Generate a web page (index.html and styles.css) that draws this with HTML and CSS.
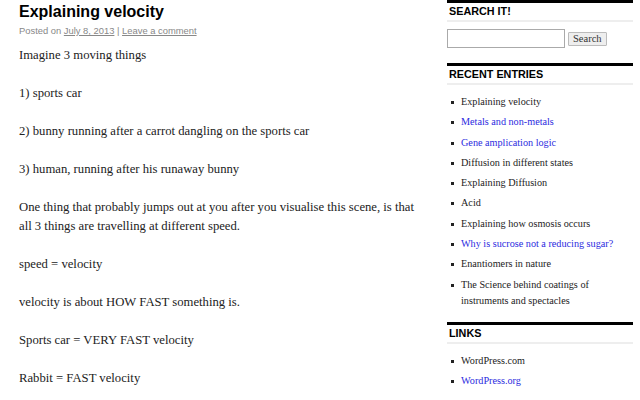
FILE: index.html
```
<!DOCTYPE html>
<html lang="en">
<head>
  <meta charset="UTF-8" />
  <title>Explaining velocity</title>
  <link rel="stylesheet" href="styles.css">
</head>
<body>
  <div class="page">
    <main class="post">
      <h1 class="post-title">Explaining velocity</h1>
      <div class="post-meta">Posted on <a href="#">July 8, 2013</a> | <a href="#">Leave a comment</a></div>
      <div class="post-body">
        <p>Imagine 3 moving things</p>
        <p>1) sports car</p>
        <p>2) bunny running after a carrot dangling on the sports car</p>
        <p>3) human, running after his runaway bunny</p>
        <p>One thing that probably jumps out at you after you visualise this scene, is that all 3 things are travelling at different speed.</p>
        <p>speed = velocity</p>
        <p>velocity is about HOW FAST something is.</p>
        <p>Sports car = VERY FAST velocity</p>
        <p>Rabbit = FAST velocity</p>
      </div>
    </main>

    <aside class="sidebar">
      <section class="widget">
        <h3 class="widget-title">Search it!</h3>
        <form class="search">
          <input type="text" />
          <button type="button">Search</button>
        </form>
      </section>

      <section class="widget">
        <h3 class="widget-title">Recent Entries</h3>
        <ul>
          <li><a href="#">Explaining velocity</a></li>
          <li><a class="fresh" href="#">Metals and non-metals</a></li>
          <li><a class="fresh" href="#">Gene amplication logic</a></li>
          <li><a href="#">Diffusion in different states</a></li>
          <li><a href="#">Explaining Diffusion</a></li>
          <li><a href="#">Acid</a></li>
          <li><a href="#">Explaining how osmosis occurs</a></li>
          <li><a class="fresh" href="#">Why is sucrose not a reducing sugar?</a></li>
          <li><a href="#">Enantiomers in nature</a></li>
          <li><a href="#">The Science behind coatings of instruments and spectacles</a></li>
        </ul>
      </section>

      <section class="widget">
        <h3 class="widget-title">Links</h3>
        <ul>
          <li><a href="#">WordPress.com</a></li>
          <li><a class="fresh" href="#">WordPress.org</a></li>
        </ul>
      </section>
    </aside>
  </div>
</body>
</html>
```

FILE: styles.css
```
* {
  box-sizing: border-box;
}

body {
  margin: 0;
  background: #fff;
  color: #333;
  font-family: 'Liberation Serif', serif;
  font-size: 12.7px;
  overflow: hidden;
}

a {
  color: inherit;
  text-decoration: none;
}

.page {
  display: flex;
  padding: 0 7px 0 19px;
}

.post {
  width: 405px;
  flex-shrink: 0;
}

.post-title {
  margin: 0;
  padding-top: 2px;
  font-family: 'Liberation Sans', sans-serif;
  font-size: 16px;
  line-height: 20px;
  color: #000;
}

.post-meta {
  margin-top: 3px;
  font-family: 'Liberation Sans', sans-serif;
  font-size: 9.4px;
  line-height: 12px;
  color: #888;
}

.post-meta a {
  color: #888;
  text-decoration: underline;
}

.post-body {
  margin-top: 9px;
}

.post-body p {
  margin: 0 0 19px;
  line-height: 19px;
  color: #222;
}

.sidebar {
  margin-left: 23px;
  flex: 1;
}

.widget {
  border-top: 3px solid #000;
  margin-bottom: 13px;
}

.widget-title {
  margin: 0;
  padding: 2px 2px 2px;
  font-family: 'Liberation Sans', sans-serif;
  font-size: 10.8px;
  line-height: 13px;
  font-weight: bold;
  text-transform: uppercase;
  color: #000;
  border-bottom: 2px solid #eee;
}

.search {
  display: flex;
  align-items: center;
  gap: 3px;
  margin-top: 7px;
  padding-bottom: 2px;
}

.search input {
  width: 118px;
  height: 19px;
  border: 1px solid #aaa;
  padding: 0 3px;
}

.search button {
  height: 14px;
  padding: 0 4px;
  font-family: 'Liberation Serif', serif;
  font-size: 10.5px;
  line-height: 12px;
  color: #333;
  background: #eee;
  border: 1px solid #bbb;
  border-radius: 1px;
}

.widget ul {
  margin: 9px 0 0;
  padding: 0 0 0 14px;
  list-style: none;
  font-size: 10.2px;
}

.widget li {
  position: relative;
  line-height: 16px;
  margin-bottom: 4.3px;
  color: #222;
}

.widget li:last-child {
  margin-bottom: 0;
}

.widget li::before {
  content: '';
  position: absolute;
  left: -10px;
  top: 7px;
  width: 3px;
  height: 3px;
  background: #222;
}

.widget li a.fresh {
  color: #2b2be0;
}
```
